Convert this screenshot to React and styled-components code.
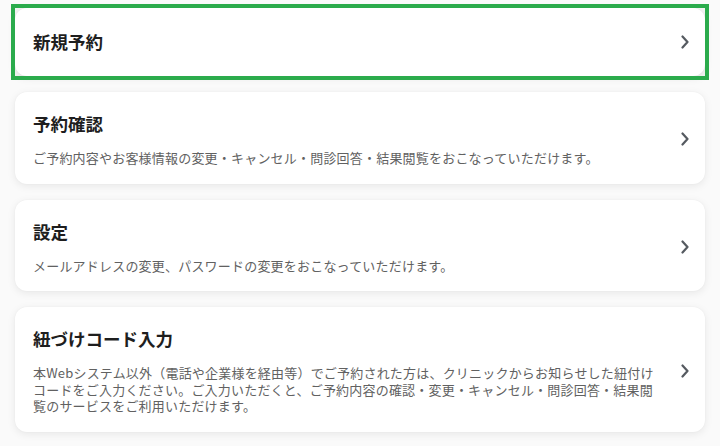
import React from "react";
import styled, { createGlobalStyle } from "styled-components";

const GlobalStyle = createGlobalStyle`
  html, body {
    margin: 0;
    padding: 0;
    background: #fafafa;
  }
  body {
    font-family: "Noto Sans CJK JP", "Noto Sans", sans-serif;
    -webkit-font-smoothing: antialiased;
  }
`;

const Page = styled.div`
  display: flex;
  flex-direction: column;
  gap: 16px;
  padding: 8px 15px 12px;
`;

const FocusRing = styled.div`
  outline: ${(p) => (p.$on ? "4px solid #2bab4c" : "none")};
  background: ${(p) => (p.$on ? "#f4f4f4" : "transparent")};
`;

const Card = styled.a`
  display: flex;
  align-items: center;
  min-height: 68px;
  box-sizing: border-box;
  padding: ${(p) => (p.$compact ? "0 16px 0 18px" : "20px 16px 17px 18px")};
  background: #ffffff;
  border-radius: 12px;
  box-shadow: 0 2px 8px rgba(0, 0, 0, 0.08), 0 0 2px rgba(0, 0, 0, 0.04);
  text-decoration: none;
  color: inherit;
`;

const Body = styled.div`
  flex: 1;
  min-width: 0;
  display: flex;
  flex-direction: column;
  gap: 14px;
  padding-right: 20px;
`;

const Title = styled.div`
  font-size: 17.5px;
  line-height: 24px;
  font-weight: 700;
  color: #1e1e1e;
`;

const Desc = styled.div`
  font-size: 13px;
  line-height: 16.5px;
  letter-spacing: 0.2px;
  color: #616161;
  white-space: nowrap;
`;

const ChevronBox = styled.span`
  flex: none;
  display: flex;
  align-items: center;
  justify-content: center;
  width: 8px;
  height: 14px;
`;

const Chevron = () => (
  <ChevronBox>
    <svg width="8" height="14" viewBox="0 0 8 14" fill="none">
      <polyline
        points="1.5,1.5 6.5,7 1.5,12.5"
        stroke="#555a60"
        strokeWidth="2.2"
        strokeLinecap="round"
        strokeLinejoin="round"
      />
    </svg>
  </ChevronBox>
);

const items = [
  { title: "新規予約", lines: [], focused: true },
  {
    title: "予約確認",
    lines: [
      "ご予約内容やお客様情報の変更・キャンセル・問診回答・結果閲覧をおこなっていただけます。",
    ],
  },
  {
    title: "設定",
    lines: ["メールアドレスの変更、パスワードの変更をおこなっていただけます。"],
  },
  {
    title: "紐づけコード入力",
    lines: [
      "本Webシステム以外（電話や企業様を経由等）でご予約された方は、クリニックからお知らせした紐付け",
      "コードをご入力ください。ご入力いただくと、ご予約内容の確認・変更・キャンセル・問診回答・結果閲",
      "覧のサービスをご利用いただけます。",
    ],
  },
];

export default function App() {
  return (
    <>
      <GlobalStyle />
      <Page>
        {items.map((it) => (
          <FocusRing key={it.title} $on={it.focused}>
            <Card href="#" $compact={it.lines.length === 0}>
              <Body>
                <Title>{it.title}</Title>
                {it.lines.length > 0 && (
                  <Desc>
                    {it.lines.map((l, i) => (
                      <React.Fragment key={i}>
                        {i > 0 && <br />}
                        {l}
                      </React.Fragment>
                    ))}
                  </Desc>
                )}
              </Body>
              <Chevron />
            </Card>
          </FocusRing>
        ))}
      </Page>
    </>
  );
}
